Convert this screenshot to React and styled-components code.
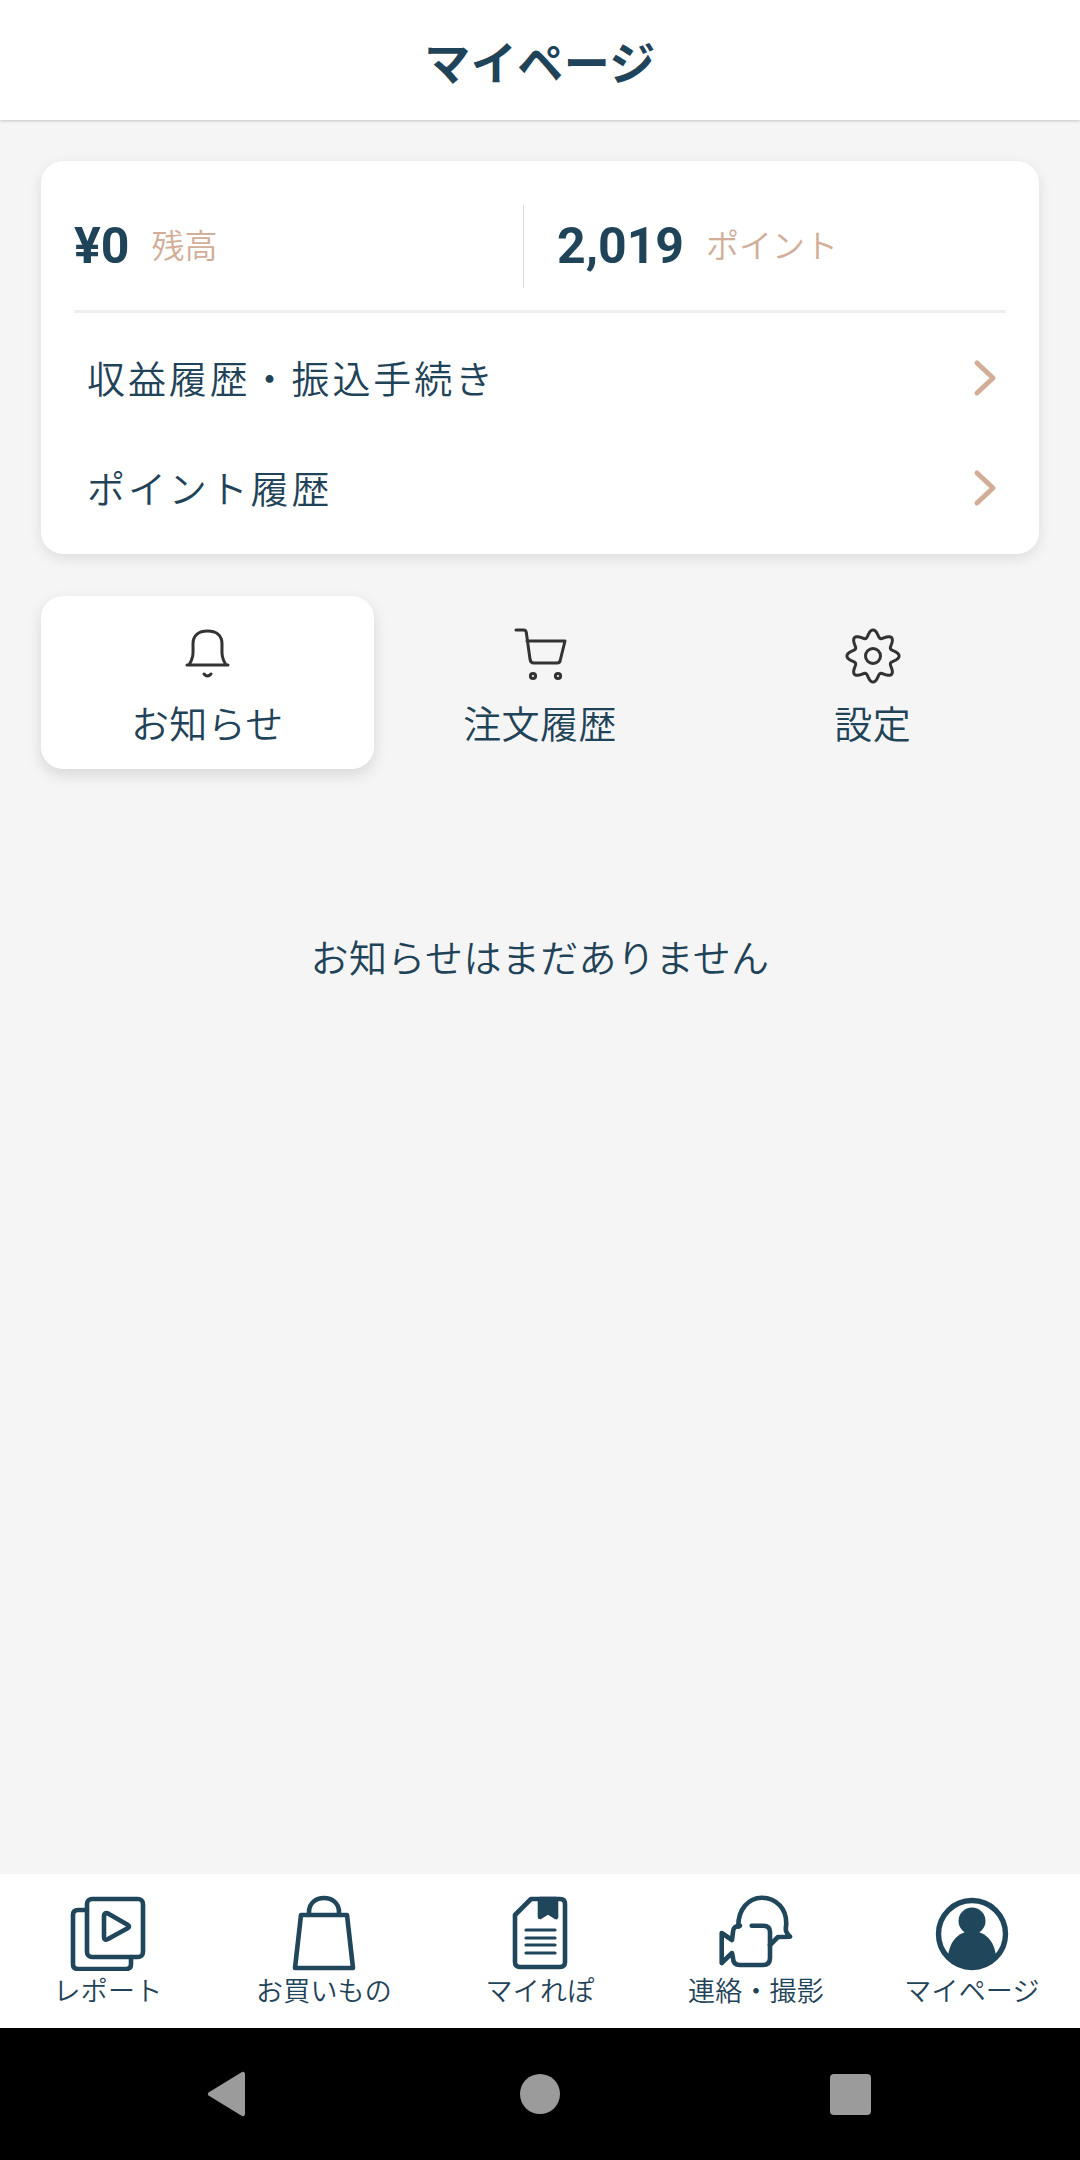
import React from 'react';
import styled, { createGlobalStyle } from 'styled-components';

const NAVY = '#1f4358';
const TAN = '#d2ae98';
const JP = '"Noto Sans CJK JP", "Noto Sans", sans-serif';

const GlobalStyle = createGlobalStyle`
  html, body {
    margin: 0;
    padding: 0;
    background: #f5f5f5;
  }
  * {
    box-sizing: border-box;
  }
`;

const Page = styled.div`
  width: 1080px;
  height: 2160px;
  display: flex;
  flex-direction: column;
  background: #f5f5f5;
  color: ${NAVY};
  font-family: ${JP};
  font-weight: 350;
`;

const Header = styled.header`
  height: 120px;
  display: flex;
  align-items: center;
  justify-content: center;
  background: #fff;
  box-shadow: 0 1px 3px rgba(0, 0, 0, 0.2);
  font-size: 46px;
  font-weight: 700;
  letter-spacing: 0.5px;
`;

const Main = styled.main`
  flex: 1;
  padding: 41px 41px 0 41px;
`;

const Card = styled.section`
  height: 393px;
  padding: 44px 33px 0;
  background: #fff;
  border-radius: 22px;
  box-shadow: 0 4px 14px rgba(0, 0, 0, 0.1);
`;

const Stats = styled.div`
  display: grid;
  grid-template-columns: 449px 1fr;
  height: 83px;
`;

const Stat = styled.div`
  display: flex;
  align-items: center;
  gap: 22px;
  padding-left: ${({ $divided }) => ($divided ? '33px' : '0')};
  border-left: ${({ $divided }) => ($divided ? '1.5px solid #d9d9d9' : 'none')};
`;

const Amount = styled.span`
  font-family: Roboto, sans-serif;
  font-size: 50px;
  font-weight: 700;
  position: relative;
  top: -1px;
`;

const StatLabel = styled.span`
  font-size: 33px;
  color: ${TAN};
  position: relative;
  top: -3px;
`;

const Rule = styled.hr`
  height: 3px;
  margin: 22px 0 10px;
  border: 0;
  background: #eeeeee;
`;

const Row = styled.div`
  height: 110px;
  display: flex;
  align-items: center;
  justify-content: space-between;
  padding: 0 8px 0 13px;
  font-size: 38px;
  letter-spacing: 2.9px;
`;

const RowText = styled.span`
  position: relative;
  top: -2px;
`;

const Chevron = () => (
  <svg width="26" height="38" viewBox="0 0 26 38" fill="none" stroke={TAN} strokeWidth="5" strokeLinecap="round" strokeLinejoin="round">
    <path d="M5 4 L21 19 L5 34" />
  </svg>
);

const Tabs = styled.div`
  display: grid;
  grid-template-columns: repeat(3, 1fr);
  margin-top: 42px;
`;

const Tab = styled.div`
  height: 173px;
  padding-top: 31px;
  display: flex;
  flex-direction: column;
  align-items: center;
  gap: 10px;
  font-size: 38px;
  letter-spacing: 0.4px;
  line-height: 50px;
  border-radius: 22px;
  background: ${({ $active }) => ($active ? '#fff' : 'transparent')};
  box-shadow: ${({ $active }) => ($active ? '0 6px 16px rgba(0, 0, 0, 0.12)' : 'none')};
`;

const TabIcon = styled.svg`
  width: 60px;
  height: 60px;
  fill: none;
  stroke: #333;
  stroke-width: 3;
  stroke-linecap: round;
  stroke-linejoin: round;
`;

// wavy eight-lobed gear outline in polar form
const gearPath = () => {
  const points = [];
  for (let i = 0; i < 160; i++) {
    const a = (i / 160) * Math.PI * 2;
    const r = 22.5 + 3.6 * Math.cos(8 * a);
    points.push(`${(30 + r * Math.sin(a)).toFixed(2)} ${(29 - r * Math.cos(a)).toFixed(2)}`);
  }
  return `M${points.join('L')}Z`;
};

const Empty = styled.p`
  margin: 164px 0 0;
  text-align: center;
  font-size: 38px;
  font-weight: 350;
  letter-spacing: 0.4px;
  line-height: 46px;
`;

const BottomNav = styled.nav`
  height: 154px;
  display: grid;
  grid-template-columns: repeat(5, 1fr);
  background: #fff;
`;

const NavItem = styled.div`
  padding-top: 21px;
  display: flex;
  flex-direction: column;
  align-items: center;
  gap: 2px;
  font-size: 27px;
  letter-spacing: 0.2px;
  line-height: 34px;
  white-space: nowrap;
`;

const NavIcon = styled.svg`
  width: 80px;
  height: 76px;
  fill: none;
  stroke: #20465b;
  stroke-width: 4.6;
  stroke-linecap: round;
  stroke-linejoin: round;
`;

const SystemBar = styled.div`
  height: 132px;
  display: flex;
  align-items: center;
  background: #000;
`;

const BackKey = styled.svg`
  width: 38px;
  height: 46px;
  margin-left: 207px;
  fill: #9b9b9b;
`;

const HomeKey = styled.div`
  width: 40px;
  height: 40px;
  margin-left: 275px;
  border-radius: 50%;
  background: #9b9b9b;
`;

const RecentKey = styled.div`
  width: 41px;
  height: 41px;
  margin-left: 270px;
  border-radius: 4px;
  background: #9b9b9b;
`;

const App = () => (
  <Page>
    <GlobalStyle />
    <Header>マイページ</Header>
    <Main>
      <Card>
        <Stats>
          <Stat>
            <Amount>¥0</Amount>
            <StatLabel>残高</StatLabel>
          </Stat>
          <Stat $divided>
            <Amount>2,019</Amount>
            <StatLabel>ポイント</StatLabel>
          </Stat>
        </Stats>
        <Rule />
        <Row>
          <RowText>収益履歴・振込手続き</RowText>
          <Chevron />
        </Row>
        <Row>
          <RowText>ポイント履歴</RowText>
          <Chevron />
        </Row>
      </Card>

      <Tabs>
        <Tab $active>
          <TabIcon viewBox="0 0 60 60">
            <path d="M10 38 H51 M12 38 C17 30 16 26 16 17 C16 8 22 4 30.5 4 C39 4 45 8 45 17 C45 26 44 30 49 38" />
            <path d="M27 47 Q30.5 51 34 47" />
          </TabIcon>
          お知らせ
        </Tab>
        <Tab>
          <TabIcon viewBox="0 0 60 60">
            <path d="M6 3 H13.5 Q16 3 16.3 5.5 L20 32 Q20.5 36 24 36 H47 Q50 36 50.3 33 L55 14 H17" />
            <circle cx="23" cy="49" r="2.6" />
            <circle cx="48" cy="49" r="2.6" />
          </TabIcon>
          注文履歴
        </Tab>
        <Tab>
          <TabIcon viewBox="0 0 60 60">
            <path d={gearPath()} />
            <circle cx="30" cy="29" r="7.5" />
          </TabIcon>
          設定
        </Tab>
      </Tabs>

      <Empty>お知らせはまだありません</Empty>
    </Main>

    <BottomNav>
      <NavItem>
        <NavIcon viewBox="0 0 80 76">
          <rect x="19" y="4" width="56" height="58" rx="5" />
          <path d="M19 15 H10 Q5 15 5 20 V69 Q5 74 10 74 H58 Q63 74 63 69 V62" />
          <path d="M36 21 V42 Q36 46 40 44 L60 33 Q62 31.5 60 30 L40 18.5 Q36 17 36 21 Z" />
        </NavIcon>
        レポート
      </NavItem>
      <NavItem>
        <NavIcon viewBox="0 0 80 76">
          <path d="M17 20 H63 L69 73 H11 Z" />
          <path d="M25 19 V17 C25 8 32 3 40 3 C48 3 55 8 55 17 V19" />
        </NavIcon>
        お買いもの
      </NavItem>
      <NavItem>
        <NavIcon viewBox="0 0 80 76">
          <path d="M15 20 L31 4 H60 Q65 4 65 9 V67 Q65 72 60 72 H20 Q15 72 15 67 Z" />
          <path d="M40 4 V22 L48 17 L56 22 V4 Z" fill="#20465b" />
          <path d="M26 35 H55 M26 43 H55 M26 50 H55 M26 58 H55" strokeWidth="3.2" />
        </NavIcon>
        マイれぽ
      </NavItem>
      <NavItem>
        <NavIcon viewBox="0 0 80 76">
          <path d="M22.3 31.7 C22 14 33 2.7 45.7 2.7 C60 2.7 72 14 70 31.7 C69.5 35 69.5 37 74 41.7 L62 42 L54 50" />
          <path d="M35.7 30.7 H47.3 Q54 30.7 54 37 V63 Q54 70 47 70 H24 Q17 70 17 63 L16 58 L5.7 68 V38 L16 45 L17 37 Q17 30.7 24 30.7" />
        </NavIcon>
        連絡・撮影
      </NavItem>
      <NavItem>
        <NavIcon viewBox="0 0 80 76">
          <circle cx="40" cy="39" r="33.5" strokeWidth="5.4" />
          <circle cx="40" cy="26" r="13.5" fill="#20465b" stroke="none" />
          <path d="M16 64 C16 48 26 36 40 36 C54 36 64 48 64 64 C58 70 49 73 40 73 C31 73 22 70 16 64 Z" fill="#20465b" stroke="none" />
        </NavIcon>
        マイページ
      </NavItem>
    </BottomNav>

    <SystemBar>
      <BackKey viewBox="0 0 38 46">
        <path d="M35 1 Q38 0 38 4 V42 Q38 46 35 45 L1.5 24.5 Q0 23 1.5 21.5 Z" />
      </BackKey>
      <HomeKey />
      <RecentKey />
    </SystemBar>
  </Page>
);

export default App;
